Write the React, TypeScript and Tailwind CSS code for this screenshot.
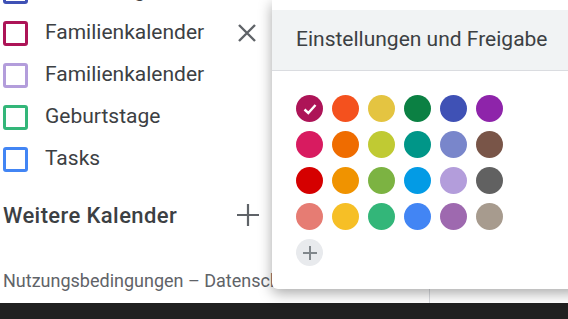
import React from "react";

const rows = [
  { label: "Erinnerungen", color: "border-[#3f51b5]" },
  { label: "Familienkalender", color: "border-[#ad1457]", close: true },
  { label: "Familienkalender", color: "border-[#b39ddb]" },
  { label: "Geburtstage", color: "border-[#33b679]" },
  { label: "Tasks", color: "border-[#4285f4]" },
];

const swatches = [
  ["bg-[#ad1457]", "bg-[#f4511e]", "bg-[#e4c441]", "bg-[#0b8043]", "bg-[#3f51b5]", "bg-[#8e24aa]"],
  ["bg-[#d81b60]", "bg-[#ef6c00]", "bg-[#c0ca33]", "bg-[#009688]", "bg-[#7986cb]", "bg-[#795548]"],
  ["bg-[#d50000]", "bg-[#f09300]", "bg-[#7cb342]", "bg-[#039be5]", "bg-[#b39ddb]", "bg-[#616161]"],
  ["bg-[#e67c73]", "bg-[#f6bf26]", "bg-[#33b679]", "bg-[#4285f4]", "bg-[#9e69af]", "bg-[#a79b8e]"],
];

export default function App() {
  return (
    <div
      className="relative w-[568px] h-[319px] overflow-hidden bg-white flex flex-col"
      style={{ fontFamily: "Roboto, 'Liberation Sans', sans-serif" }}
    >
      <div className="flex h-[303px] overflow-hidden">
        {/* Sidebar */}
        <div className="w-[272px] shrink-0 flex flex-col">
          <div className="mt-[-30px] flex flex-col">
            {rows.map((r, i) => (
              <div key={i} className="h-[42px] flex items-center">
                <div className={`ml-[3px] w-[25px] h-[25px] rounded-[3px] border-[3px] ${r.color}`} />
                <span className="ml-[17px] text-[21px] text-[#3c4043] whitespace-nowrap">{r.label}</span>
                {r.close && (
                  <svg className="ml-auto mr-[15px]" width="20" height="20" viewBox="0 0 20 20">
                    <path d="M2 2 L18 18 M18 2 L2 18" stroke="#5f6368" strokeWidth="2.4" />
                  </svg>
                )}
              </div>
            ))}
          </div>
          <div className="h-[46px] mt-[12px] flex items-center">
            <span className="ml-[3px] text-[22px] font-medium text-[#3c4043] whitespace-nowrap tracking-[0.4px]">
              Weitere Kalender
            </span>
            <svg className="ml-auto mr-[13px]" width="22" height="22" viewBox="0 0 22 22">
              <path d="M11 0 V22 M0 11 H22" stroke="#5f6368" strokeWidth="2.2" />
            </svg>
          </div>
          <div className="mt-[29px] ml-[3px] text-[18px] text-[#5f6368] whitespace-nowrap">
            Nutzungsbedingungen – Datenschutz
          </div>
        </div>
        {/* Main area behind popup */}
        <div className="flex-1 flex">
          <div className="w-[157px] shrink-0" />
          <div className="border-l border-[#dadce0] flex-1" />
        </div>
      </div>
      <div className="h-[16px] bg-[#202020]" />

      {/* Popup */}
      <div className="absolute left-[272px] top-0 w-[310px] h-[289px] bg-white rounded-b-[6px] shadow-[0_4px_14px_rgba(0,0,0,0.35)] flex flex-col">
        <div className="h-[10px]" />
        <div className="h-[61px] bg-[#f1f3f4] border-b border-[#dadce0] flex items-center pl-[24px]">
          <span className="text-[21px] text-[#3c4043] whitespace-nowrap">Einstellungen und Freigabe</span>
        </div>
        <div className="pl-[24px] pt-[24px] flex flex-col gap-[9px]">
          {swatches.map((row, i) => (
            <div key={i} className="flex gap-[9px]">
              {row.map((c, j) => (
                <div key={j} className={`w-[27px] h-[27px] rounded-full ${c} flex items-center justify-center`}>
                  {i === 0 && j === 0 && (
                    <svg width="16" height="16" viewBox="0 0 16 16">
                      <path d="M2.5 8.5 L6.3 12 L13.5 4" stroke="white" strokeWidth="2.4" fill="none" />
                    </svg>
                  )}
                </div>
              ))}
            </div>
          ))}
          <div className="w-[27px] h-[27px] rounded-full bg-[#e8eaed] flex items-center justify-center">
            <svg width="14" height="14" viewBox="0 0 14 14">
              <path d="M7 0 V14 M0 7 H14" stroke="#80868b" strokeWidth="2" />
            </svg>
          </div>
        </div>
      </div>
    </div>
  );
}
